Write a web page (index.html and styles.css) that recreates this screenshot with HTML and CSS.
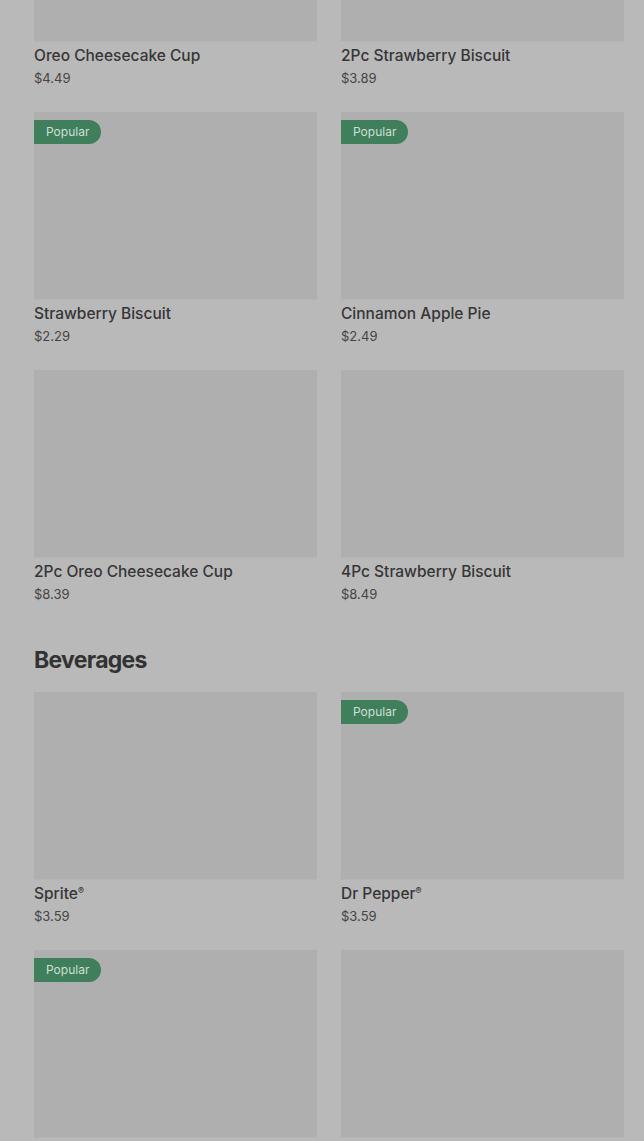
FILE: index.html
```html
<!DOCTYPE html>
<html>
<head>
<meta charset="utf-8">
<link rel="stylesheet" href="styles.css">
</head>
<body>
<main class="menu">
  <section class="section">
    <div class="grid">
      <div class="card"><div class="thumb"></div><div class="info"><div class="name">Oreo Cheesecake Cup</div><div class="price">$4.49</div></div></div>
      <div class="card"><div class="thumb"></div><div class="info"><div class="name">2Pc Strawberry Biscuit</div><div class="price">$3.89</div></div></div>
      <div class="card"><div class="thumb"><span class="badge">Popular</span></div><div class="info"><div class="name">Strawberry Biscuit</div><div class="price">$2.29</div></div></div>
      <div class="card"><div class="thumb"><span class="badge">Popular</span></div><div class="info"><div class="name">Cinnamon Apple Pie</div><div class="price">$2.49</div></div></div>
      <div class="card"><div class="thumb"></div><div class="info"><div class="name">2Pc Oreo Cheesecake Cup</div><div class="price">$8.39</div></div></div>
      <div class="card"><div class="thumb"></div><div class="info"><div class="name">4Pc Strawberry Biscuit</div><div class="price">$8.49</div></div></div>
    </div>
  </section>
  <section class="section">
    <h2 class="heading">Beverages</h2>
    <div class="grid">
      <div class="card"><div class="thumb"></div><div class="info"><div class="name">Sprite<sup>®</sup></div><div class="price">$3.59</div></div></div>
      <div class="card"><div class="thumb"><span class="badge">Popular</span></div><div class="info"><div class="name">Dr Pepper<sup>®</sup></div><div class="price">$3.59</div></div></div>
      <div class="card"><div class="thumb"><span class="badge">Popular</span></div><div class="info"><div class="name">Coca-Cola<sup>®</sup></div><div class="price">$3.59</div></div></div>
      <div class="card"><div class="thumb"></div><div class="info"><div class="name">Diet Coke<sup>®</sup></div><div class="price">$3.59</div></div></div>
    </div>
  </section>
</main>
</body>
</html>
```

FILE: styles.css
```css
html, body {
  margin: 0;
  padding: 0;
  background: #b9b9b9;
  font-family: Inter, "Liberation Sans", sans-serif;
  color: #3a3a3a;
  overflow: hidden;
}

.menu {
  margin-top: -146px;
  padding: 0 20px 0 34px;
  display: flex;
  flex-direction: column;
  gap: 15px;
}

.heading {
  margin: 24px 0 16px;
  font-size: 23px;
  line-height: 32px;
  font-weight: 700;
  letter-spacing: -0.7px;
  color: #333;
}

.grid {
  display: grid;
  grid-template-columns: 283px 283px;
  column-gap: 24px;
  row-gap: 23px;
}

.thumb {
  position: relative;
  height: 187px;
  background: #afafaf;
  border-bottom: 1px solid #b4b4b4;
}

.badge {
  position: absolute;
  top: 8px;
  left: 0;
  height: 24px;
  line-height: 24px;
  padding: 0 12px;
  font-size: 12px;
  color: #cfdfd5;
  background: #3f7f5b;
  border-radius: 0 12px 12px 0;
}

.info {
  padding-top: 3px;
}

.name {
  font-size: 15.5px;
  line-height: 22px;
  font-weight: 500;
  color: #363636;
}

.name sup {
  font-size: 9px;
  vertical-align: 5px;
  line-height: 0;
}

.price {
  font-size: 13px;
  line-height: 22px;
  color: #454545;
}
```
